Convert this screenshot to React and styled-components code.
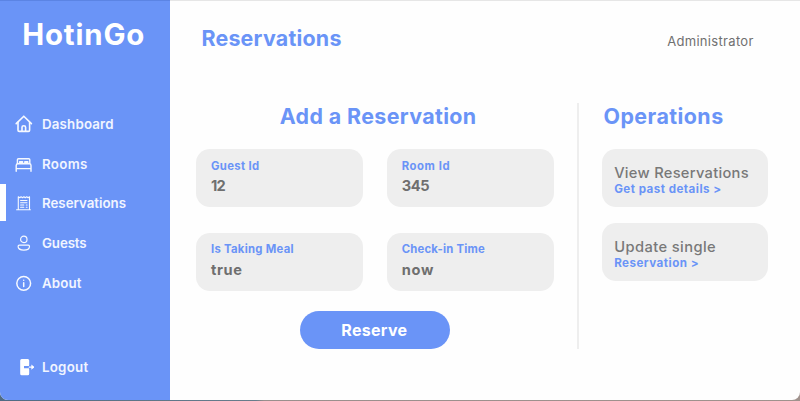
import React from "react";
import styled, { createGlobalStyle } from "styled-components";

const blue = "#6a94f7";

const GlobalStyle = createGlobalStyle`
  * { box-sizing: border-box; }
  body {
    margin: 0;
    font-family: Inter, "Open Sans", sans-serif;
    background: linear-gradient(90deg, #4f6b84 0%, #687d8c 32%, #9a8f8d 33%, #a0928d 100%);
  }
`;

const Window = styled.div`
  display: flex;
  width: 800px;
  height: 400px;
  margin-bottom: 1px;
  overflow: hidden;
  background: #fefefe;
  border-radius: 0 0 8px 8px;
  box-shadow: inset 0 1px 0 #e6e6e6;
`;

const Sidebar = styled.aside`
  width: 170px;
  flex: none;
  padding-top: 15px;
  background: ${blue};
  box-shadow: inset 0 1px 0 #5b84e4;
  color: #fff;
`;

const Logo = styled.h1`
  margin: 0 0 49.5px;
  padding-left: 22.2px;
  font-size: 29.4px;
  font-weight: 700;
  line-height: 40px;
  letter-spacing: 0.85px;
  white-space: nowrap;
`;

const NavRow = styled.a`
  display: flex;
  align-items: center;
  height: 39.6px;
  margin-top: ${(p) => p.$top || 0}px;
  font-size: 13.3px;
  font-weight: 600;
  line-height: 16px;
  letter-spacing: ${(p) => p.$spacing}px;
  color: #f1f5ff;
`;

const Marker = styled.span`
  align-self: flex-start;
  width: 6px;
  height: 37.6px;
  background: ${(p) => (p.$active ? "#fff" : "transparent")};
`;

const NavIcon = styled.svg`
  width: 20px;
  height: 20px;
  margin: 0 8px 0 8px;
  fill: none;
  stroke: #f6f9ff;
  stroke-width: ${(p) => p.$stroke || 1.4};
  stroke-linecap: round;
  stroke-linejoin: round;
`;

const Main = styled.main`
  flex: 1;
`;

const Header = styled.header`
  display: flex;
  align-items: center;
  justify-content: space-between;
  height: 77.4px;
  padding: 0 46.3px 0 31.4px;
`;

const Title = styled.h2`
  margin: 0;
  font-size: 21.4px;
  font-weight: 700;
  line-height: 25.4px;
  letter-spacing: ${(p) => p.$spacing}px;
  color: ${blue};
  white-space: nowrap;
`;

const UserName = styled.span`
  padding-top: 5.6px;
  font-size: 13px;
  letter-spacing: 0.32px;
  color: #707070;
`;

const Body = styled.div`
  display: flex;
  height: 246px;
  margin-top: 26.1px;
  padding-left: 26px;
`;

const Form = styled.form`
  display: flex;
  flex-direction: column;
  align-items: center;
  width: 357.7px;
`;

const SectionTitle = styled(Title)`
  padding: 0.8px 0 0 ${(p) => p.$left}px;
`;

const Fields = styled.div`
  display: grid;
  grid-template-columns: 167px 167px;
  gap: 25.5px 23.7px;
  margin-top: 19.1px;
`;

const Card = styled.div`
  height: 58.3px;
  border-radius: 14px;
  background: #eee;
  white-space: nowrap;
`;

const Field = styled(Card)`
  padding: 8.9px 0 0 15px;
`;

const FieldLabel = styled.div`
  font-size: 11.3px;
  font-weight: 700;
  line-height: 16px;
  letter-spacing: ${(p) => p.$spacing}px;
  color: ${blue};
`;

const FieldValue = styled.div`
  margin-top: 2.6px;
  font-size: 14.6px;
  font-weight: 700;
  line-height: 20px;
  letter-spacing: ${(p) => p.$spacing}px;
  color: #6f6f6f;
`;

const ReserveButton = styled.button`
  width: 150.5px;
  height: 38.2px;
  margin-top: 20.6px;
  padding: 0 1px 0 0;
  border: 0;
  border-radius: 20px;
  background: ${blue};
  color: #fff;
  font: 700 16px Inter, sans-serif;
  letter-spacing: 0.3px;
`;

const Divider = styled.div`
  width: 2px;
  margin: 0 23.4px 0 23.3px;
  background: #eee;
`;

const Operations = styled.section`
  width: 165.2px;
`;

const Operation = styled(Card)`
  margin-top: ${(p) => p.$top}px;
  padding: 15.3px 0 0 11.8px;
`;

const OperationName = styled.div`
  font-size: 14.7px;
  font-weight: 500;
  line-height: 18px;
  letter-spacing: ${(p) => p.$spacing}px;
  color: #787878;
`;

const OperationLink = styled.div`
  font-size: 11.6px;
  font-weight: 700;
  line-height: 14px;
  letter-spacing: ${(p) => p.$spacing}px;
  color: ${blue};
`;

const HomeIcon = () => (
  <NavIcon viewBox="0 0 20 20" $stroke={1.6}>
    <path d="M2.2 9.6 9.8 2.2l7.6 7.4" />
    <path d="M4 8.4v7.8q0 1.2 1.2 1.2h9.2q1.2 0 1.2-1.2V8.4" />
    <path d="M8 17v-3.8q0-1.4 1.8-1.4t1.8 1.4V17" />
  </NavIcon>
);

const BedIcon = () => (
  <NavIcon viewBox="0 0 20 20">
    <path d="M3.4 9.4V5.8q0-1.1 1.1-1.1h10.2q1.1 0 1.1 1.1v3.6M2.2 17.3v-5.8q0-1.7 1.7-1.7h11.4q1.7 0 1.7 1.7v5.8M2.2 14.6H17" />
    <path d="M5.6 9.2V7.8h3v1.4zM10.8 9.2V7.8h3v1.4z" />
  </NavIcon>
);

const ReceiptIcon = () => (
  <NavIcon viewBox="0 0 20 20" $stroke={1.1}>
    <path d="M4.3 16.5V3.8l1.4 1 1.4-1 1.4 1 1.4-1 1.4 1 1.4-1 1.4 1 1.4-1v12.7M2.6 16.7h13.8" />
    <path d="M6.6 7.5h6.4M6.6 9.8h6.4M6.6 12h3.2M12.3 12h.8M6.6 14.2h3.2M12.3 14.2h.8" />
  </NavIcon>
);

const GuestIcon = () => (
  <NavIcon viewBox="0 0 20 20" $stroke={1.2}>
    <circle cx="9.8" cy="6.4" r="3.2" />
    <path d="M5.4 12.2h8.8q1.3 0 1.3 1.3c0 2.2-2.6 3.6-5.7 3.6s-5.7-1.4-5.7-3.6q0-1.3 1.3-1.3z" />
  </NavIcon>
);

const InfoIcon = () => (
  <NavIcon viewBox="0 0 20 20" $stroke={1.5}>
    <circle cx="9.7" cy="10.3" r="6.9" />
    <path d="M9.7 9.8v3.8M9.7 7.2v.1" />
  </NavIcon>
);

const LogoutIcon = () => (
  <NavIcon viewBox="0 0 20 20" $stroke={1.3}>
    <path
      d="M7.7 2h6q1.5 0 1.5 1.5v4.2l-.3 1.4H10v2.2h4.9l.3 1.4v4.1q0 1.5-1.5 1.5h-6q-1.5 0-1.5-1.5V3.5Q6.2 2 7.7 2z"
      fill="#fff"
      stroke="none"
    />
    <path d="M15.3 10.2h4" />
    <path d="m17.4 7.6 3 2.6-3 2.6z" fill="#fff" stroke="none" />
  </NavIcon>
);

const navItems = [
  { label: "Dashboard", Icon: HomeIcon, spacing: 0.18 },
  { label: "Rooms", Icon: BedIcon, spacing: 0.36 },
  { label: "Reservations", Icon: ReceiptIcon, spacing: 0, active: true },
  { label: "Guests", Icon: GuestIcon, spacing: -0.1 },
  { label: "About", Icon: InfoIcon, spacing: 0.15 },
  { label: "Logout", Icon: LogoutIcon, spacing: 0.25, top: 45.1 },
];

const fields = [
  { label: "Guest Id", value: "12", ls: 0.34, vs: -0.8 },
  { label: "Room Id", value: "345", ls: 0.6, vs: -0.4 },
  { label: "Is Taking Meal", value: "true", ls: 0.28, vs: 0.65 },
  { label: "Check-in Time", value: "now", ls: 0.22, vs: 0.8 },
];

const operations = [
  { name: "View Reservations", link: "Get past details >", ns: 0.28, ls: 0.47, top: 19.1 },
  { name: "Update single", link: "Reservation >", ns: 0.4, ls: 0.48, top: 16 },
];

export default function App() {
  return (
    <>
      <GlobalStyle />
      <Window>
        <Sidebar>
          <Logo>HotinGo</Logo>
          <nav>
            {navItems.map(({ label, Icon, spacing, active, top }) => (
              <NavRow key={label} $spacing={spacing} $top={top}>
                <Marker $active={active} />
                <Icon />
                {label}
              </NavRow>
            ))}
          </nav>
        </Sidebar>
        <Main>
          <Header>
            <Title $spacing={0.24}>Reservations</Title>
            <UserName>Administrator</UserName>
          </Header>
          <Body>
            <Form>
              <SectionTitle $spacing={0.38} $left={6.6}>Add a Reservation</SectionTitle>
              <Fields>
                {fields.map((f) => (
                  <Field key={f.label}>
                    <FieldLabel $spacing={f.ls}>{f.label}</FieldLabel>
                    <FieldValue $spacing={f.vs}>{f.value}</FieldValue>
                  </Field>
                ))}
              </Fields>
              <ReserveButton type="button">Reserve</ReserveButton>
            </Form>
            <Divider />
            <Operations>
              <SectionTitle $spacing={0.45} $left={1.1}>Operations</SectionTitle>
              {operations.map((o) => (
                <Operation key={o.name} $top={o.top}>
                  <OperationName $spacing={o.ns}>{o.name}</OperationName>
                  <OperationLink $spacing={o.ls}>{o.link}</OperationLink>
                </Operation>
              ))}
            </Operations>
          </Body>
        </Main>
      </Window>
    </>
  );
}
